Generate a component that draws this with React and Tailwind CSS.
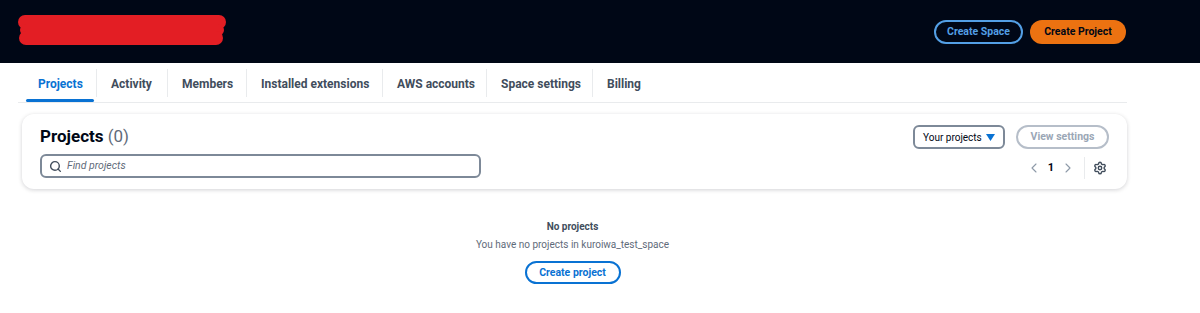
import { Search, ChevronLeft, ChevronRight, Settings } from 'lucide-react';

const tabs = [
  { label: 'Projects', w: 'w-[72px]' },
  { label: 'Activity', w: 'w-[70px]' },
  { label: 'Members', w: 'w-[78px]' },
  { label: 'Installed extensions', w: 'w-[135px]' },
  { label: 'AWS accounts', w: 'w-[103px]' },
  { label: 'Space settings', w: 'w-[105px]' },
  { label: 'Billing', w: 'w-[64px]' },
];

export default function App() {
  return (
    <div className="min-h-[313px] bg-white text-[#000716]" style={{ fontFamily: '"Roboto", "Noto Sans", sans-serif' }}>
      {/* top bar */}
      <header className="h-[63px] bg-[#000716] flex items-center justify-between pl-[18px] pr-[74px]">
        <div className="relative w-[208px] h-[32px] -mt-[3px]">
          <div className="absolute left-0 top-[1px] w-[208px] h-[14px] rounded-full bg-[#e31e24]" />
          <div className="absolute left-[2px] top-[10px] w-[204px] h-[12px] rounded-full bg-[#e31e24]" />
          <div className="absolute left-[1px] top-[17px] w-[204px] h-[14px] rounded-full bg-[#e31e24]" />
        </div>
        <div className="flex items-center gap-[7px]">
          <button className="h-[24px] w-[89px] rounded-full border-2 border-[#539fe5] text-[#539fe5] text-[10.5px] font-bold">Create Space</button>
          <button className="h-[24px] w-[96px] rounded-full bg-[#ec7211] text-[#000716] text-[10.5px] font-bold">Create Project</button>
        </div>
      </header>

      <div className="w-[1109px] ml-[18px]">
        {/* tabs */}
        <nav className="h-[40px] flex items-stretch border-b border-[#e9ebed] pl-[6px]">
          {tabs.map((t, i) => (
            <div key={t.label} className="flex items-center">
              {i > 0 && <div className="w-px h-[28px] bg-[#e9ebed]" />}
              <div className={`relative h-full ${t.w} flex items-center pl-[14px] pt-[2px] text-[12px] font-bold whitespace-nowrap ${i === 0 ? 'text-[#0972d3]' : 'text-[#414d5c]'}`}>
                {t.label}
                {i === 0 && <span className="absolute left-[2px] right-[2px] bottom-0 h-[3px] rounded-full bg-[#0972d3]" />}
              </div>
            </div>
          ))}
        </nav>

        {/* card */}
        <section className="mt-[11px] ml-[4px] rounded-[12px] bg-white shadow-[0_1px_4px_rgba(0,7,22,0.18)] px-[18px] pt-[11px] pb-[10px] flex justify-between">
          <div className="flex flex-col">
            <h2 className="text-[17px] leading-[22px]">
              <span className="font-bold">Projects</span> <span className="text-[#5f6b7a]">(0)</span>
            </h2>
            <div className="mt-[7px] w-[441px] h-[24px] rounded-[6px] border-2 border-[#7d8998] flex items-center pl-[7px] gap-[5px]">
              <Search size={13} strokeWidth={2.6} className="text-[#414d5c]" />
              <span className="text-[10.5px] italic text-[#5f6b7a]">Find projects</span>
            </div>
          </div>
          <div className="flex flex-col items-end">
            <div className="flex items-center gap-[11px]">
              <button className="h-[24px] w-[92px] px-[8px] rounded-[6px] border-2 border-[#7d8998] flex items-center justify-between text-[10px] text-[#000716]">
                Your projects
                <svg width="9" height="7" viewBox="0 0 9 7"><path d="M0 0h9L4.5 7z" fill="#0972d3" /></svg>
              </button>
              <button className="h-[24px] w-[93px] rounded-full border-2 border-[#b6bec9] text-[10.5px] font-bold text-[#9ba7b6]">View settings</button>
            </div>
            <div className="mt-[8px] flex items-center h-[22px] pr-[2px]">
              <ChevronLeft size={16} strokeWidth={1.6} className="text-[#8d99a8]" />
              <span className="mx-[6px] text-[11px] font-bold">1</span>
              <ChevronRight size={16} strokeWidth={1.6} className="text-[#8d99a8]" />
              <div className="w-px h-[22px] bg-[#e9ebed] mx-[8px]" />
              <Settings size={14} strokeWidth={2.4} className="text-[#414d5c]" />
            </div>
          </div>
        </section>

        {/* empty */}
        <div className="mt-[30px] flex flex-col items-center text-[10px]">
          <p className="font-bold text-[#414d5c] leading-[16px]">No projects</p>
          <p className="mt-[2px] text-[#5f6b7a] leading-[16px]">You have no projects in kuroiwa_test_space</p>
          <button className="mt-[8px] h-[23px] w-[96px] rounded-full border-2 border-[#0972d3] text-[#0972d3] font-bold text-[10.5px]">Create project</button>
        </div>
      </div>
    </div>
  );
}
